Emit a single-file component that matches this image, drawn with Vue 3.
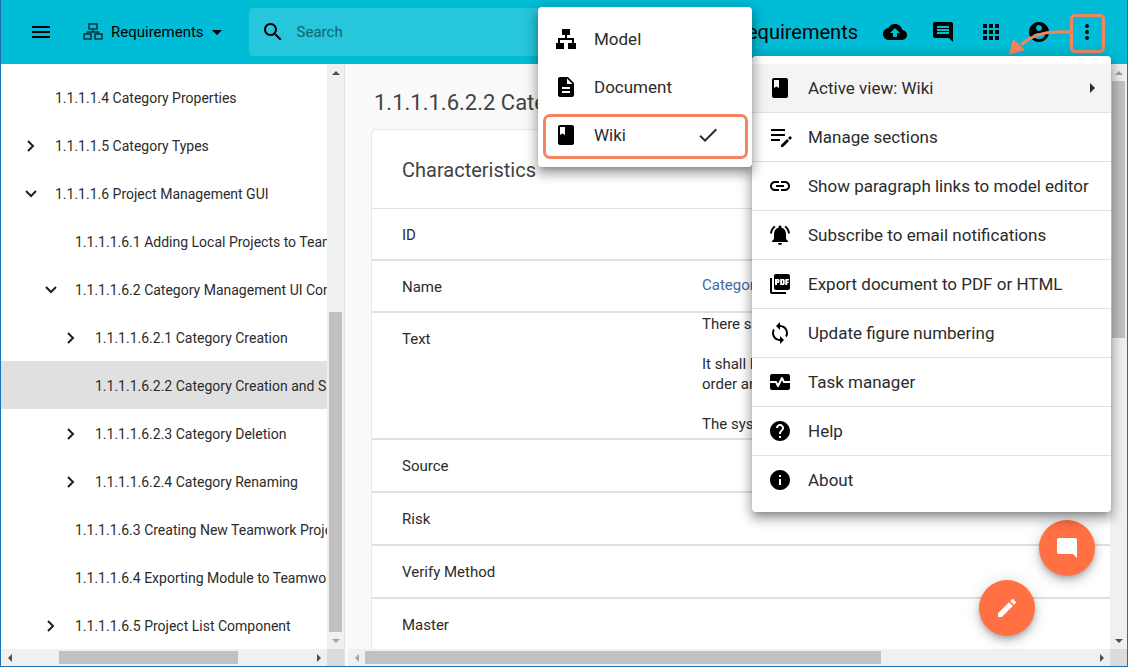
<script setup>
const tree = [
  { text: '1.1.1.1.4 Category Properties', level: 0, state: '' },
  { text: '1.1.1.1.5 Category Types', level: 0, state: 'closed' },
  { text: '1.1.1.1.6 Project Management GUI', level: 0, state: 'open' },
  { text: '1.1.1.1.6.1 Adding Local Projects to Teamwork', level: 1, state: '' },
  { text: '1.1.1.1.6.2 Category Management UI Component', level: 1, state: 'open' },
  { text: '1.1.1.1.6.2.1 Category Creation', level: 2, state: 'closed' },
  { text: '1.1.1.1.6.2.2 Category Creation and Saving', level: 2, state: '', selected: true },
  { text: '1.1.1.1.6.2.3 Category Deletion', level: 2, state: 'closed' },
  { text: '1.1.1.1.6.2.4 Category Renaming', level: 2, state: 'closed' },
  { text: '1.1.1.1.6.3 Creating New Teamwork Project', level: 1, state: '' },
  { text: '1.1.1.1.6.4 Exporting Module to Teamwork', level: 1, state: '' },
  { text: '1.1.1.1.6.5 Project List Component', level: 1, state: 'closed' },
]

const icons = {
  book: 'M18 2H6c-1.1 0-2 .9-2 2v16c0 1.1.9 2 2 2h12c1.1 0 2-.9 2-2V4c0-1.1-.9-2-2-2zM6 4h5v8l-2.5-1.5L6 12V4z',
  model: 'M8 2h8v6h-3v3h7v5h2v6h-8v-6h4v-3H6v3h4v6H2v-6h2v-5h7V8H8z',
  document: 'M14 2H6c-1.1 0-2 .9-2 2v16c0 1.1.9 2 2 2h12c1.1 0 2-.9 2-2V8l-6-6zm2 16H8v-2h8v2zm0-4H8v-2h8v2zm-3-5V3.500L18.500 9H13z',
  sections: 'M3 4h14v2H3zM3 9h14v2H3zM3 14h9v2H3zM13 20v2h2l6-6-2-2zM20 13l2 2 1.500-1.500c.4-.4.4-.8 0-1.200l-.8-.8c-.4-.4-.8-.4-1.200 0z',
  link: 'M3.900 12c0-1.710 1.390-3.100 3.100-3.100h4V7H7c-2.760 0-5 2.240-5 5s2.240 5 5 5h4v-1.900H7c-1.710 0-3.100-1.390-3.100-3.100zM8 13h8v-2H8v2zm9-6h-4v1.900h4c1.710 0 3.100 1.390 3.100 3.100s-1.390 3.100-3.100 3.100h-4V17h4c2.760 0 5-2.240 5-5s-2.240-5-5-5z',
  bell: 'M7.580 4.080L6.150 2.650C3.750 4.480 2.170 7.300 2.030 10.500h2c.15-2.650 1.510-4.970 3.550-6.420zm12.390 6.420h2c-.15-3.200-1.730-6.020-4.120-7.850l-1.420 1.430c2.020 1.450 3.390 3.770 3.540 6.420zM18 11c0-3.070-1.640-5.640-4.500-6.320V4c0-.83-.67-1.500-1.500-1.500s-1.500.67-1.500 1.500v.68C7.630 5.360 6 7.920 6 11v5l-2 2v1h16v-1l-2-2v-5zm-6 11c.14 0 .27-.01.4-.04.650-.14 1.180-.58 1.440-1.180.1-.24.15-.5.15-.78h-4c.01 1.100.9 2 2.010 2z',
  pdf: 'M20 2H8c-1.100 0-2 .9-2 2v12c0 1.100.9 2 2 2h12c1.100 0 2-.9 2-2V4c0-1.100-.9-2-2-2zm-8.500 7.500c0 .83-.67 1.500-1.500 1.500H9v2H7V7h3c.83 0 1.500.67 1.500 1.500v1zm5.200 2c0 .83-.67 1.500-1.500 1.500h-3V7h3c.83 0 1.500.67 1.500 1.500v3zm4.300-3h-1.800v1.200h1.500V11h-1.500v2h-1.900V7H21v1.500zM9 9.500h.7v-1H9v1zM4 6H2v14c0 1.100.9 2 2 2h14v-2H4V6zm10 5.500h.8v-3H14v3z',
  sync: 'M12 4V1L8 5l4 4V6c3.310 0 6 2.690 6 6 0 1.010-.25 1.970-.7 2.800l1.460 1.460C19.540 15.030 20 13.570 20 12c0-4.420-3.580-8-8-8zm0 14c-3.310 0-6-2.690-6-6 0-1.010.25-1.970.7-2.800L5.240 7.740C4.460 8.970 4 10.430 4 12c0 4.420 3.580 8 8 8v3l4-4-4-4v3z',
  task: 'M20 4H4c-1.100 0-2 .9-2 2v5h6c.4 0 .7.2.9.600l1.100 2.200 3.100-6.200c.3-.7 1.500-.7 1.800 0L16.600 11H22V6c0-1.100-.9-2-2-2zM15.100 12.400L14 10.200l-3.100 6.200c-.3.700-1.500.7-1.800 0L7.400 13H2v5c0 1.100.9 2 2 2h16c1.100 0 2-.9 2-2v-5h-6c-.4 0-.7-.2-.9-.600z',
  help: 'M12 2C6.480 2 2 6.480 2 12s4.480 10 10 10 10-4.480 10-10S17.520 2 12 2zm1 17h-2v-2h2v2zm2.070-7.750l-.9.920C13.450 12.900 13 13.500 13 15h-2v-.5c0-1.100.450-2.100 1.170-2.830l1.240-1.260c.37-.36.59-.86.59-1.410 0-1.100-.9-2-2-2s-2 .9-2 2H8c0-2.210 1.790-4 4-4s4 1.790 4 4c0 .88-.36 1.680-.93 2.250z',
  info: 'M12 2C6.480 2 2 6.480 2 12s4.480 10 10 10 10-4.480 10-10S17.520 2 12 2zm1 15h-2v-6h2v6zm0-8h-2V7h2v2z',
  cloud: 'M19.350 10.040C18.670 6.590 15.640 4 12 4 9.110 4 6.600 5.640 5.350 8.040 2.340 8.360 0 10.910 0 14c0 3.310 2.690 6 6 6h13c2.760 0 5-2.240 5-5 0-2.640-2.050-4.780-4.650-4.960zM14 13v4h-4v-4H7l5-5 5 5h-3z',
  comment: 'M21.990 4c0-1.100-.89-2-1.990-2H4c-1.100 0-2 .9-2 2v12c0 1.100.9 2 2 2h14l4 4-.01-18zM18 14H6v-2h12v2zm0-3H6V9h12v2zm0-3H6V6h12v2z',
  apps: 'M4 8h4V4H4v4zm6 12h4v-4h-4v4zm-6 0h4v-4H4v4zm0-6h4v-4H4v4zm6 0h4v-4h-4v4zm6-10v4h4V4h-4zm-6 4h4V4h-4v4zm6 6h4v-4h-4v4zm0 6h4v-4h-4v4z',
  account: 'M12 2C6.480 2 2 6.480 2 12s4.480 10 10 10 10-4.480 10-10S17.520 2 12 2zm0 3c1.660 0 3 1.340 3 3s-1.340 3-3 3-3-1.340-3-3 1.340-3 3-3zm0 14.200c-2.500 0-4.710-1.280-6-3.220.03-1.990 4-3.080 6-3.080 1.990 0 5.970 1.090 6 3.080-1.290 1.940-3.500 3.220-6 3.220z',
  more: 'M12 8c1.100 0 2-.9 2-2s-.9-2-2-2-2 .9-2 2 .9 2 2 2zm0 2c-1.100 0-2 .9-2 2s.9 2 2 2 2-.9 2-2-.9-2-2-2zm0 6c-1.100 0-2 .9-2 2s.9 2 2 2 2-.9 2-2-.9-2-2-2z',
  search: 'M15.500 14h-.79l-.28-.27C15.410 12.590 16 11.110 16 9.500 16 5.910 13.090 3 9.500 3S3 5.910 3 9.500 5.910 16 9.500 16c1.610 0 3.090-.59 4.230-1.570l.27.28v.79l5 4.990L20.490 19l-4.990-5zm-6 0C7.010 14 5 11.990 5 9.500S7.010 5 9.500 5 14 7.010 14 9.500 11.990 14 9.500 14z',
  burger: 'M3 18h18v-2H3v2zm0-5h18v-2H3v2zm0-7v2h18V6H3z',
  check: 'M9 16.170L4.830 12l-1.420 1.410L9 19 21 7l-1.410-1.410z',
  pencil: 'M3 17.250V21h3.750L17.810 9.940l-3.750-3.750L3 17.250zM20.710 7.040c.39-.39.39-1.020 0-1.410l-2.340-2.340c-.39-.39-1.020-.39-1.410 0l-1.830 1.830 3.750 3.750 1.830-1.830z',
  bubble: 'M22 4c0-1.100-.9-2-2-2H4c-1.100 0-2 .9-2 2v12c0 1.100.9 2 2 2h14l4 4V4z',
}

const actions = [
  { icon: 'cloud', label: 'Upload' },
  { icon: 'comment', label: 'Comments' },
  { icon: 'apps', label: 'Applications' },
  { icon: 'account', label: 'Account' },
]

const views = [
  { icon: 'model', text: 'Model' },
  { icon: 'document', text: 'Document' },
  { icon: 'book', text: 'Wiki', active: true },
]

const menu = [
  { icon: 'book', text: 'Active view: Wiki', active: true },
  { icon: 'sections', text: 'Manage sections' },
  { icon: 'link', text: 'Show paragraph links to model editor' },
  { icon: 'bell', text: 'Subscribe to email notifications' },
  { icon: 'pdf', text: 'Export document to PDF or HTML' },
  { icon: 'sync', text: 'Update figure numbering' },
  { icon: 'task', text: 'Task manager' },
  { icon: 'help', text: 'Help' },
  { icon: 'info', text: 'About' },
]

const laterRows = ['Source', 'Risk', 'Verify Method', 'Master']
</script>

<template>
  <div class="app">
    <header class="bar">
      <button class="icon-btn" aria-label="Open navigation">
        <svg class="icon" viewBox="0 0 24 24"><path :d="icons.burger" /></svg>
      </button>
      <button class="project">
        <svg class="tree-icon" viewBox="0 0 20 18" fill="none" stroke="#06323a" stroke-width="1.500">
          <path d="M6 1h8v5H6zM1 11h7v5H1zM12 11h7v5h-7zM10 6v3M4.500 11V9h11v2" />
        </svg>
        <span>Requirements</span>
        <svg class="caret" viewBox="0 0 10 5"><path d="M0 0h10L5 5z" /></svg>
      </button>
      <label class="search">
        <svg class="icon" viewBox="0 0 24 24"><path :d="icons.search" /></svg>
        <input type="search" placeholder="Search" aria-label="Search" />
      </label>
      <h1 class="bar-title">Requirements</h1>
      <nav class="actions">
        <button v-for="a in actions" :key="a.icon" class="icon-btn" :aria-label="a.label">
          <svg class="icon" viewBox="0 0 24 24"><path :d="icons[a.icon]" /></svg>
        </button>
        <button class="icon-btn marked" aria-label="More options">
          <svg class="icon" viewBox="0 0 24 24"><path :d="icons.more" /></svg>
        </button>
        <svg class="pointer" viewBox="0 0 66 30">
          <path d="M63 7C43 6 27 8 14 20" fill="none" stroke="#f5855f" stroke-width="3" />
          <path d="M2 30L6 14l12 11z" fill="#f5855f" />
        </svg>
      </nav>
    </header>

    <div class="body">
      <aside class="side">
        <ul class="tree">
          <li v-for="n in tree" :key="n.text" :class="['node', 'level-' + n.level, { selected: n.selected }]">
            <button class="toggle" :aria-label="n.state ? 'Toggle' : null" :disabled="!n.state">
              <svg v-if="n.state === 'closed'" viewBox="0 0 14 14"><path d="M4 2l5 5-5 5" /></svg>
              <svg v-if="n.state === 'open'" viewBox="0 0 14 14"><path d="M2 4l5 5 5-5" /></svg>
            </button>
            <a href="#">{{ n.text }}</a>
          </li>
        </ul>
        <div class="vbar">
          <i class="arrow up"></i>
          <div class="track"><i class="lead"></i><i class="thumb"></i></div>
          <i class="arrow down faint"></i>
        </div>
        <div class="hbar">
          <i class="arrow left"></i>
          <div class="track"><i class="lead"></i><i class="thumb"></i><i class="rest"></i></div>
          <i class="arrow right"></i>
        </div>
        <div class="corner"></div>
      </aside>

      <main class="main">
        <section class="content">
          <h2>1.1.1.1.6.2.2 Category Creation</h2>
          <div class="card">
            <h3>Characteristics</h3>
            <table>
              <tbody>
                <tr class="short"><th scope="row">ID</th><td></td></tr>
                <tr class="short"><th scope="row">Name</th><td><a href="#">Category Creation</a></td></tr>
                <tr class="long">
                  <th scope="row">Text</th>
                  <td>There shall be<br /><br />It shall be in<br />order and<br /><br />The system</td>
                </tr>
                <tr v-for="r in laterRows" :key="r"><th scope="row">{{ r }}</th><td></td></tr>
              </tbody>
            </table>
          </div>
        </section>
        <div class="vbar">
          <i class="arrow up faint"></i>
          <div class="track"><i class="thumb"></i><i class="rest"></i></div>
          <i class="arrow down"></i>
        </div>
        <div class="hbar">
          <i class="arrow left faint"></i>
          <div class="track"><i class="thumb"></i><i class="rest"></i></div>
          <i class="arrow right"></i>
        </div>
        <div class="corner"></div>
        <button class="fab fab-comment" aria-label="Add comment">
          <svg class="icon" viewBox="0 0 24 24"><path :d="icons.bubble" /></svg>
        </button>
        <button class="fab fab-edit" aria-label="Edit">
          <svg class="icon" viewBox="0 0 24 24"><path :d="icons.pencil" /></svg>
        </button>
      </main>
    </div>

    <div class="menu main-menu">
      <button v-for="m in menu" :key="m.text" :class="['item', { active: m.active }]">
        <svg class="icon" viewBox="0 0 24 24"><path fill-rule="evenodd" :d="icons[m.icon]" /></svg>
        <span>{{ m.text }}</span>
        <svg v-if="m.active" class="sub-arrow" viewBox="0 0 5 10"><path d="M0 0l5 5-5 5z" /></svg>
      </button>
      <div class="menu view-menu">
        <button v-for="v in views" :key="v.text" :class="['item', { current: v.active }]">
          <svg class="icon" viewBox="0 0 24 24"><path :d="icons[v.icon]" /></svg>
          <span>{{ v.text }}</span>
          <svg v-if="v.active" class="tick" viewBox="0 0 24 24"><path :d="icons.check" /></svg>
        </button>
      </div>
    </div>
  </div>
</template>

<style>
body {
  margin: 0;
}
</style>

<style scoped>
* {
  box-sizing: border-box;
}
.app {
  position: relative;
  display: flex;
  flex-direction: column;
  height: 100vh;
  overflow: hidden;
  border: 1px solid #1c72b4;
  border-top: 0;
  background: #fafafa;
  color: #2b2b2b;
  font-family: Roboto, "Liberation Sans", sans-serif;
  font-size: 15px;
}
button {
  padding: 0;
  border: 0;
  background: none;
  color: inherit;
  font: inherit;
}
a {
  color: inherit;
  text-decoration: none;
}
svg {
  display: block;
  flex: none;
  fill: currentColor;
}
.icon {
  width: 24px;
  height: 24px;
}
.bar {
  display: flex;
  flex: none;
  align-items: center;
  height: 64px;
  padding: 0 16px;
  background: #00bcd7;
  color: #000;
}
.icon-btn {
  display: grid;
  place-items: center;
  width: 48px;
  height: 48px;
}
.project {
  display: flex;
  align-items: center;
  gap: 8px;
  margin-left: 18px;
}
.tree-icon {
  width: 20px;
  height: 18px;
  fill: none;
}
.caret {
  width: 10px;
  height: 5px;
}
.search {
  display: flex;
  flex: 1;
  align-items: center;
  gap: 12px;
  height: 48px;
  max-width: 440px;
  margin-left: 27px;
  padding: 0 12px;
  border-radius: 4px;
  background: #26c6dc;
}
.search input {
  flex: 1;
  min-width: 0;
  padding: 0;
  border: 0;
  outline: 0;
  background: none;
  font: inherit;
  font-size: 15px;
}
.search input::placeholder {
  color: #136370;
  opacity: 1;
}
.bar-title {
  flex: 1;
  margin: 0 13px 0 0;
  font-size: 20px;
  font-weight: 400;
  text-align: right;
}
.actions {
  position: relative;
  display: flex;
}
.marked::before {
  content: "";
  position: absolute;
  top: 6px;
  right: 6px;
  box-sizing: border-box;
  width: 35px;
  height: 39px;
  border: 3px solid #f5855f;
  border-radius: 5px;
}
.pointer {
  position: absolute;
  top: 17px;
  right: 38px;
  width: 66px;
  height: 30px;
}
.body {
  display: grid;
  flex: 1;
  grid-template-columns: 344px minmax(0, 1fr);
  column-gap: 3px;
  min-height: 0;
}
.side,
.main {
  display: grid;
  grid-template-columns: minmax(0, 1fr) 17px;
  grid-template-rows: minmax(0, 1fr) 17px;
  min-height: 0;
}
.side {
  border-right: 1px solid #e0e0e0;
  background: #fff;
}
.main {
  position: relative;
}
.tree {
  margin: 0;
  padding: 9px 0 0;
  overflow: hidden;
  list-style: none;
  font-size: 14px;
}
.node {
  display: flex;
  align-items: center;
  gap: 17px;
  height: 48px;
  padding-left: 23px;
  padding-top: 2px;
  white-space: nowrap;
}
.level-1 {
  padding-left: 43px;
}
.level-2 {
  padding-left: 63px;
}
.selected {
  background: #e0e0e0;
}
.toggle {
  flex: none;
  width: 14px;
  height: 14px;
}
.toggle svg {
  fill: none;
  stroke: #212121;
  stroke-width: 2;
}
.vbar,
.hbar {
  display: flex;
  align-items: center;
  background: #f0f0f0;
}
.vbar {
  flex-direction: column;
}
.corner {
  background: #dcdcdc;
}
.track {
  display: flex;
  flex: 1;
  min-width: 0;
  min-height: 0;
}
.vbar .track {
  flex-direction: column;
  width: 13px;
}
.hbar .track {
  height: 13px;
}
.thumb {
  background: #c1c1c1;
}
.side .vbar .lead {
  flex: 231;
}
.side .vbar .thumb {
  flex: 320;
}
.side .hbar .lead {
  flex: 41;
}
.side .hbar .thumb {
  flex: 179;
}
.side .hbar .rest {
  flex: 72;
}
.main .vbar .thumb {
  flex: 257;
}
.main .vbar .rest {
  flex: 294;
}
.main .hbar .thumb {
  flex: 516;
}
.main .hbar .rest {
  flex: 212;
}
.arrow {
  display: grid;
  place-items: center;
  flex: none;
  width: 17px;
  height: 17px;
  color: #505050;
}
.arrow::before {
  content: "";
  border: 4px solid transparent;
}
.up::before {
  border-top: 0;
  border-bottom-color: currentColor;
}
.down::before {
  border-bottom: 0;
  border-top-color: currentColor;
}
.left::before {
  border-left: 0;
  border-right-color: currentColor;
}
.right::before {
  border-right: 0;
  border-left-color: currentColor;
}
.faint {
  color: #a3a3a3;
}
.content {
  overflow: hidden;
  padding: 23px 0 0 24px;
}
h2 {
  margin: 0 0 11px 2px;
  font-size: 22px;
  font-weight: 400;
  line-height: 32px;
  color: #424242;
  white-space: nowrap;
}
.card {
  min-width: 1000px;
  min-height: 600px;
  border-radius: 4px;
  background: #fff;
  box-shadow: 0 0 2px rgba(0, 0, 0, 0.25);
}
h3 {
  margin: 0;
  padding: 28px 30px 26px;
  border-bottom: 1px solid #e0e0e0;
  font-size: 20px;
  font-weight: 400;
  line-height: 24px;
  color: #424242;
}
table {
  width: 100%;
  border-spacing: 0;
  table-layout: fixed;
  line-height: 20px;
}
th,
td {
  height: 53px;
  padding: 0;
  border-bottom: 2px solid #e0e0e0;
  font-weight: 400;
  text-align: left;
}
th {
  width: 330px;
  padding-left: 30px;
}
.short th,
.short td {
  height: 52px;
}
.short th {
  padding-top: 2px;
}
.short td {
  padding-bottom: 2px;
}
.long th {
  padding-top: 16px;
  vertical-align: top;
}
.long td {
  height: 127px;
  padding-top: 1px;
  vertical-align: top;
}
td a {
  color: #3f6ba3;
}
.fab {
  position: absolute;
  display: grid;
  place-items: center;
  width: 56px;
  height: 56px;
  border-radius: 50%;
  background: #ff7043;
  color: #fff;
  box-shadow: 0 3px 5px -1px rgba(0, 0, 0, 0.2), 0 6px 10px rgba(0, 0, 0, 0.14), 0 1px 18px rgba(0, 0, 0, 0.12);
}
.fab-comment {
  right: 32px;
  bottom: 90px;
}
.fab-edit {
  right: 92px;
  bottom: 30px;
}
.menu {
  position: absolute;
  padding: 8px 0;
  border-radius: 4px;
  background: #fff;
  box-shadow: 0 5px 5px -3px rgba(0, 0, 0, 0.2), 0 8px 10px 1px rgba(0, 0, 0, 0.14), 0 3px 14px 2px rgba(0, 0, 0, 0.25);
}
.main-menu {
  top: 56px;
  right: 16px;
  width: 359px;
}
.view-menu {
  top: -49px;
  right: 100%;
  width: 214px;
}
.item {
  display: flex;
  align-items: center;
  gap: 16px;
  width: 100%;
  height: 48px;
  padding: 0 16px;
  font-size: 17px;
  text-align: left;
  white-space: nowrap;
}
.item .icon {
  color: #000;
}
.main-menu > .item:not(:nth-last-child(2)) {
  height: 49px;
  border-bottom: 1px solid #e0e0e0;
}
.active {
  background: #f4f4f4;
}
.sub-arrow {
  width: 5px;
  height: 10px;
  margin-left: auto;
}
.current {
  position: relative;
}
.current::before {
  content: "";
  position: absolute;
  inset: 3px 4px 0 5px;
  border: 3px solid #f5855f;
  border-radius: 7px;
}
.tick {
  width: 24px;
  height: 24px;
  margin: 0 16px 0 auto;
}
</style>
